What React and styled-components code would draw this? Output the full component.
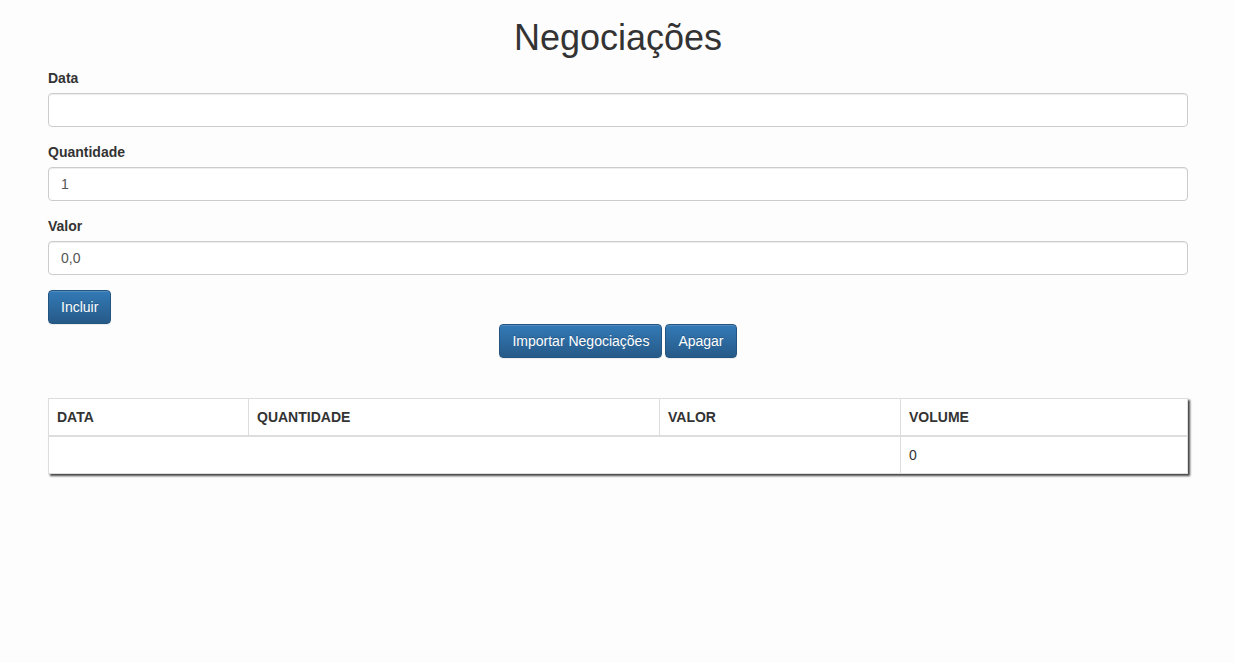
import React from 'react'
import styled, { createGlobalStyle } from 'styled-components'

const GlobalStyle = createGlobalStyle`
  * { box-sizing: border-box; }
  body {
    margin: 0;
    background: #fdfdfd;
    font-family: "Liberation Sans", Arial, sans-serif;
    font-size: 14px;
    line-height: 1.42857143;
    color: #333;
  }
`

const Container = styled.div`
  width: 1170px;
  margin: 0 auto;
  padding: 0 15px 40px;
  transform: translateX(1px);
`

const Title = styled.h1`
  font-size: 36px;
  font-weight: 500;
  line-height: 1.1;
  margin: 18px 0 10px;
  text-align: center;
`

const FormGroup = styled.div`
  margin-bottom: 15px;
`

const Label = styled.label`
  display: inline-block;
  margin-bottom: 5px;
  font-weight: 700;
`

const Input = styled.input`
  display: block;
  width: 100%;
  height: 34px;
  padding: 6px 12px;
  font-family: inherit;
  font-size: 14px;
  color: #555;
  background: #fff;
  border: 1px solid #ccc;
  border-radius: 4px;
  box-shadow: inset 0 1px 1px rgba(0, 0, 0, .075);
  outline: none;
`

const Button = styled.button`
  display: inline-block;
  height: 34px;
  padding: 6px 12px;
  font-family: inherit;
  font-size: 14px;
  line-height: 1.42857143;
  color: #fff;
  background: linear-gradient(to bottom, #337ab7 0, #265a88 100%);
  border: 1px solid #245580;
  border-radius: 4px;
  text-shadow: 0 -1px 0 rgba(0, 0, 0, .2);
  box-shadow: inset 0 1px 0 rgba(255, 255, 255, .15), 0 1px 1px rgba(0, 0, 0, .075);
  cursor: pointer;
`

const Actions = styled.div`
  display: flex;
  justify-content: center;
  gap: 3px;
`

const TableWrap = styled.div`
  margin-top: 40px;
  box-shadow: 2px 2px 2px #444;
`

const Table = styled.table`
  width: 100%;
  border-collapse: collapse;
  background: #fff;
`

const Th = styled.th`
  width: ${p => p.$w};
  padding: 8px;
  text-align: left;
  font-weight: 700;
  border: 1px solid #ddd;
  border-bottom-width: 2px;
`

const Td = styled.td`
  padding: 8px;
  height: 38px;
  border: 1px solid #ddd;
`

export default function App() {
  return (
    <>
      <GlobalStyle />
      <Container>
        <Title>Negociações</Title>
        <form onSubmit={e => e.preventDefault()}>
          <FormGroup>
            <Label htmlFor="data">Data</Label>
            <Input id="data" type="text" />
          </FormGroup>
          <FormGroup>
            <Label htmlFor="quantidade">Quantidade</Label>
            <Input id="quantidade" type="text" defaultValue="1" />
          </FormGroup>
          <FormGroup>
            <Label htmlFor="valor">Valor</Label>
            <Input id="valor" type="text" defaultValue="0,0" />
          </FormGroup>
          <Button type="submit">Incluir</Button>
        </form>
        <Actions>
          <Button>Importar Negociações</Button>
          <Button>Apagar</Button>
        </Actions>
        <TableWrap>
          <Table>
            <thead>
              <tr>
                <Th $w="200px">DATA</Th>
                <Th $w="411px">QUANTIDADE</Th>
                <Th $w="241px">VALOR</Th>
                <Th>VOLUME</Th>
              </tr>
            </thead>
            <tbody>
              <tr>
                <Td colSpan={3}></Td>
                <Td>0</Td>
              </tr>
            </tbody>
          </Table>
        </TableWrap>
      </Container>
    </>
  )
}
